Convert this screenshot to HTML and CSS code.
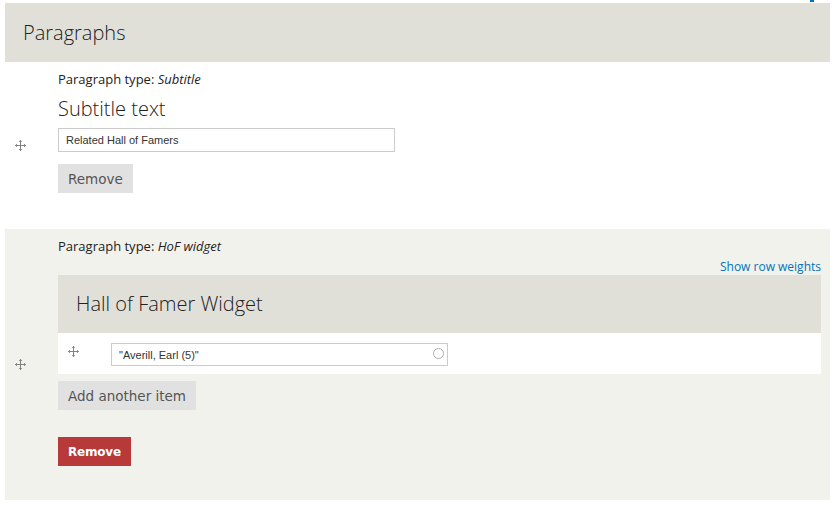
FILE: index.html
```html
<!DOCTYPE html>
<html lang="en">
<head>
    <meta charset="UTF-8">
    <title>Paragraphs</title>
    <link rel="stylesheet" href="styles.css">
</head>
<body>

<div class="top-link"></div>

<div class="field">
    <h2 class="field-title">Paragraphs</h2>

    <!-- Primer parrafo: subtitulo -->
    <div class="row row-odd">
        <div class="handle">
            <svg class="drag" viewBox="0 0 12 12"><path d="M6 0.5 L6 11.5 M0.5 6 L11.5 6 M4.5 2 L6 0.5 L7.5 2 M4.5 10 L6 11.5 L7.5 10 M2 4.5 L0.5 6 L2 7.5 M10 4.5 L11.5 6 L10 7.5"/></svg>
        </div>
        <div class="row-body">
            <div class="type">Paragraph type: <em>Subtitle</em></div>
            <label class="big-label">Subtitle text</label>
            <input type="text" class="text-input" value="Related Hall of Famers">
            <div class="actions"><button class="btn">Remove</button></div>
        </div>
    </div>

    <!-- Segundo parrafo: widget -->
    <div class="row row-even">
        <div class="handle">
            <svg class="drag" viewBox="0 0 12 12"><path d="M6 0.5 L6 11.5 M0.5 6 L11.5 6 M4.5 2 L6 0.5 L7.5 2 M4.5 10 L6 11.5 L7.5 10 M2 4.5 L0.5 6 L2 7.5 M10 4.5 L11.5 6 L10 7.5"/></svg>
        </div>
        <div class="row-body">
            <div class="type">Paragraph type: <em>HoF widget</em></div>
            <div class="weights"><a href="#">Show row weights</a></div>
            <div class="widget">
                <div class="widget-title">Hall of Famer Widget</div>
                <div class="widget-row">
                    <svg class="drag" viewBox="0 0 12 12"><path d="M6 0.5 L6 11.5 M0.5 6 L11.5 6 M4.5 2 L6 0.5 L7.5 2 M4.5 10 L6 11.5 L7.5 10 M2 4.5 L0.5 6 L2 7.5 M10 4.5 L11.5 6 L10 7.5"/></svg>
                    <div class="auto-wrap">
                        <input type="text" class="text-input auto" value="&quot;Averill, Earl (5)&quot;">
                        <span class="throbber"></span>
                    </div>
                </div>
            </div>
            <div class="actions add"><button class="btn">Add another item</button></div>
            <div class="actions danger"><button class="btn btn-danger">Remove</button></div>
        </div>
    </div>
</div>

</body>
</html>
```
FILE: styles.css
```css
/* Estilos generales */
body {
    margin: 0;
    padding: 3px 4px 0 5px;
    background: #fff;
    font-family: "Open Sans", sans-serif;
    color: #222;
}
.top-link {
    position: absolute;
    top: 0;
    left: 810px;
    width: 4px;
    height: 2px;
    background: #0074bd;
}
.field-title {
    margin: 0;
    height: 59px;
    line-height: 59px;
    padding-left: 18px;
    background: #e0e0d9;
    font-size: 20px;
    font-weight: 300;
}
.row {
    display: flex;
}
.row-odd {
    height: 167px;
    background: #fff;
}
.row-even {
    height: 271px;
    background: #f2f2ec;
}
.handle {
    width: 53px;
    display: flex;
    align-items: center;
    padding-left: 10px;
    box-sizing: border-box;
}
.drag {
    width: 11px;
    height: 11px;
    fill: none;
    stroke: #777;
    stroke-width: 1;
}
.row-body {
    flex: 1;
    padding-top: 8px;
    padding-right: 9px;
}
.type {
    font-size: 13px;
    line-height: 18px;
}
.big-label {
    display: block;
    font-size: 20px;
    font-weight: 300;
    margin-top: 8px;
    line-height: 26px;
}
.text-input {
    width: 337px;
    height: 24px;
    box-sizing: border-box;
    margin-top: 6px;
    border: 1px solid #ccc;
    padding: 0 7px;
    font-family: "Liberation Sans", Arial, sans-serif;
    font-size: 11px;
    color: #333;
}
.actions {
    display: flex;
    margin-top: 12px;
}
.actions.add {
    margin-top: 7px;
}
.actions.danger {
    margin-top: 27px;
}
.btn {
    height: 29px;
    border: none;
    background: #e1e1e1;
    color: #555;
    font-family: "DejaVu Sans", Verdana, sans-serif;
    font-size: 13.5px;
    padding: 0 10px;
}
.actions:first-of-type .btn {
    font-size: 13px;
}
.btn-danger {
    background: #b7393a;
    color: #fff;
    font-weight: bold;
    font-size: 12px;
    padding: 0 10px;
    letter-spacing: -0.2px;
}
.weights {
    text-align: right;
    font-size: 12px;
    line-height: 16px;
    margin-top: 4px;
}
.weights a {
    color: #0074bd;
    text-decoration: none;
}
.widget {
    background: #fff;
}
.widget-title {
    height: 58px;
    line-height: 58px;
    padding-left: 18px;
    background: #e0e0d9;
    font-size: 20px;
    font-weight: 300;
}
.widget-row {
    height: 41px;
    display: flex;
    align-items: center;
    padding-left: 10px;
}
.widget-row .drag {
    margin-top: -4px;
}
.auto-wrap {
    position: relative;
    margin-left: 32px;
    margin-top: 1px;
}
.text-input.auto {
    margin-top: 0;
    height: 23px;
}
.throbber {
    position: absolute;
    right: 4px;
    top: 6px;
    width: 9px;
    height: 9px;
    border: 1.5px solid #b0b0b0;
    border-radius: 50%;
}
```
